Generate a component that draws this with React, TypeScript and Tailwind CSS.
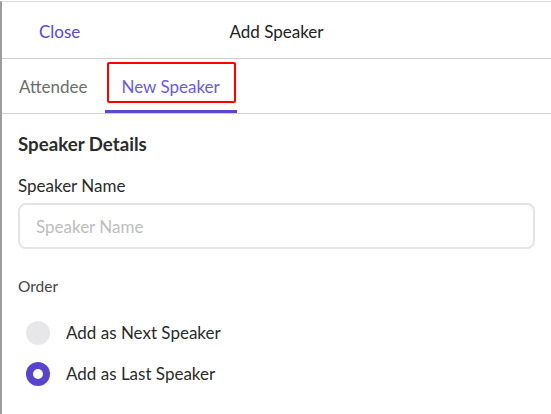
import { useState } from "react";

const App = () => {
  const [tab, setTab] = useState<string>("new");
  const [order, setOrder] = useState<string>("last");
  const [name, setName] = useState<string>("");

  return (
    <div className="w-[551px] h-[414px] bg-white pt-px font-['Lato','Noto_Sans',sans-serif] overflow-hidden">
      <div className="h-full border-t border-l-2 border-t-[#dcdcdc] border-l-[#9c9c9c] flex flex-col">
        {/* header */}
        <div className="grid grid-cols-[1fr_auto_1fr] items-center h-[57px] pt-[3px] border-b border-[#cfcfcf]">
          <button className="justify-self-start pl-[37px] text-[17px] text-[#5a48cf]">Close</button>
          <h1 className="text-[17px] text-[#222]">Add Speaker</h1>
          <div />
        </div>

        {/* tabs */}
        <div className="flex h-[55px] border-b border-[#cfcfcf]">
          <button
            onClick={() => setTab("attendee")}
            className={`px-[17px] pt-[4px] text-[17px] border-b-[3px] ${
              tab === "attendee" ? "border-[#5a48cf] text-[#6b5bd8]" : "border-transparent text-[#6d6d6d]"
            }`}
          >
            Attendee
          </button>
          <button
            onClick={() => setTab("new")}
            className={`relative px-[17px] pt-[4px] text-[17px] border-b-[3px] ${
              tab === "new" ? "border-[#5a48cf] text-[#6b5bd8]" : "border-transparent text-[#6d6d6d]"
            }`}
          >
            New Speaker
            <span className="absolute left-[2px] right-[1px] top-[3px] bottom-[7px] border-2 border-[#ff0000] rounded-[2px]" />
          </button>
        </div>

        {/* body */}
        <div className="pl-[16px] pr-[16px] pt-[19px]">
          <h2 className="text-[18.7px] font-bold text-[#2b2b2b] leading-[22px]">Speaker Details</h2>
          <label className="block mt-[21px] text-[17px] text-[#2b2b2b] leading-[20px]">Speaker Name</label>
          <input
            value={name}
            onChange={(e) => setName(e.target.value)}
            placeholder="Speaker Name"
            className="mt-[7px] w-full h-[46px] rounded-[8px] border-2 border-[#e4e4e4] px-[16px] pt-px text-[17px] text-[#222] placeholder:text-[#bdbdbd] outline-none"
          />
          <p className="mt-[28px] text-[15.5px] text-[#444] leading-[18px]">Order</p>

          <div className="mt-[26px] flex flex-col gap-[17px]">
            {[
              { id: "next", label: "Add as Next Speaker" },
              { id: "last", label: "Add as Last Speaker" },
            ].map((o) => (
              <button key={o.id} onClick={() => setOrder(o.id)} className="flex items-center gap-[16px] pl-[8px]">
                {order === o.id ? (
                  <span className="w-[24px] h-[24px] rounded-full bg-[#5a44cc] flex items-center justify-center">
                    <span className="w-[10px] h-[10px] rounded-full bg-white" />
                  </span>
                ) : (
                  <span className="w-[24px] h-[24px] rounded-full bg-[#e7e7e9]" />
                )}
                <span className="text-[17px] text-[#2b2b2b] leading-[24px]">{o.label}</span>
              </button>
            ))}
          </div>
        </div>
      </div>
    </div>
  );
};

export default App;
